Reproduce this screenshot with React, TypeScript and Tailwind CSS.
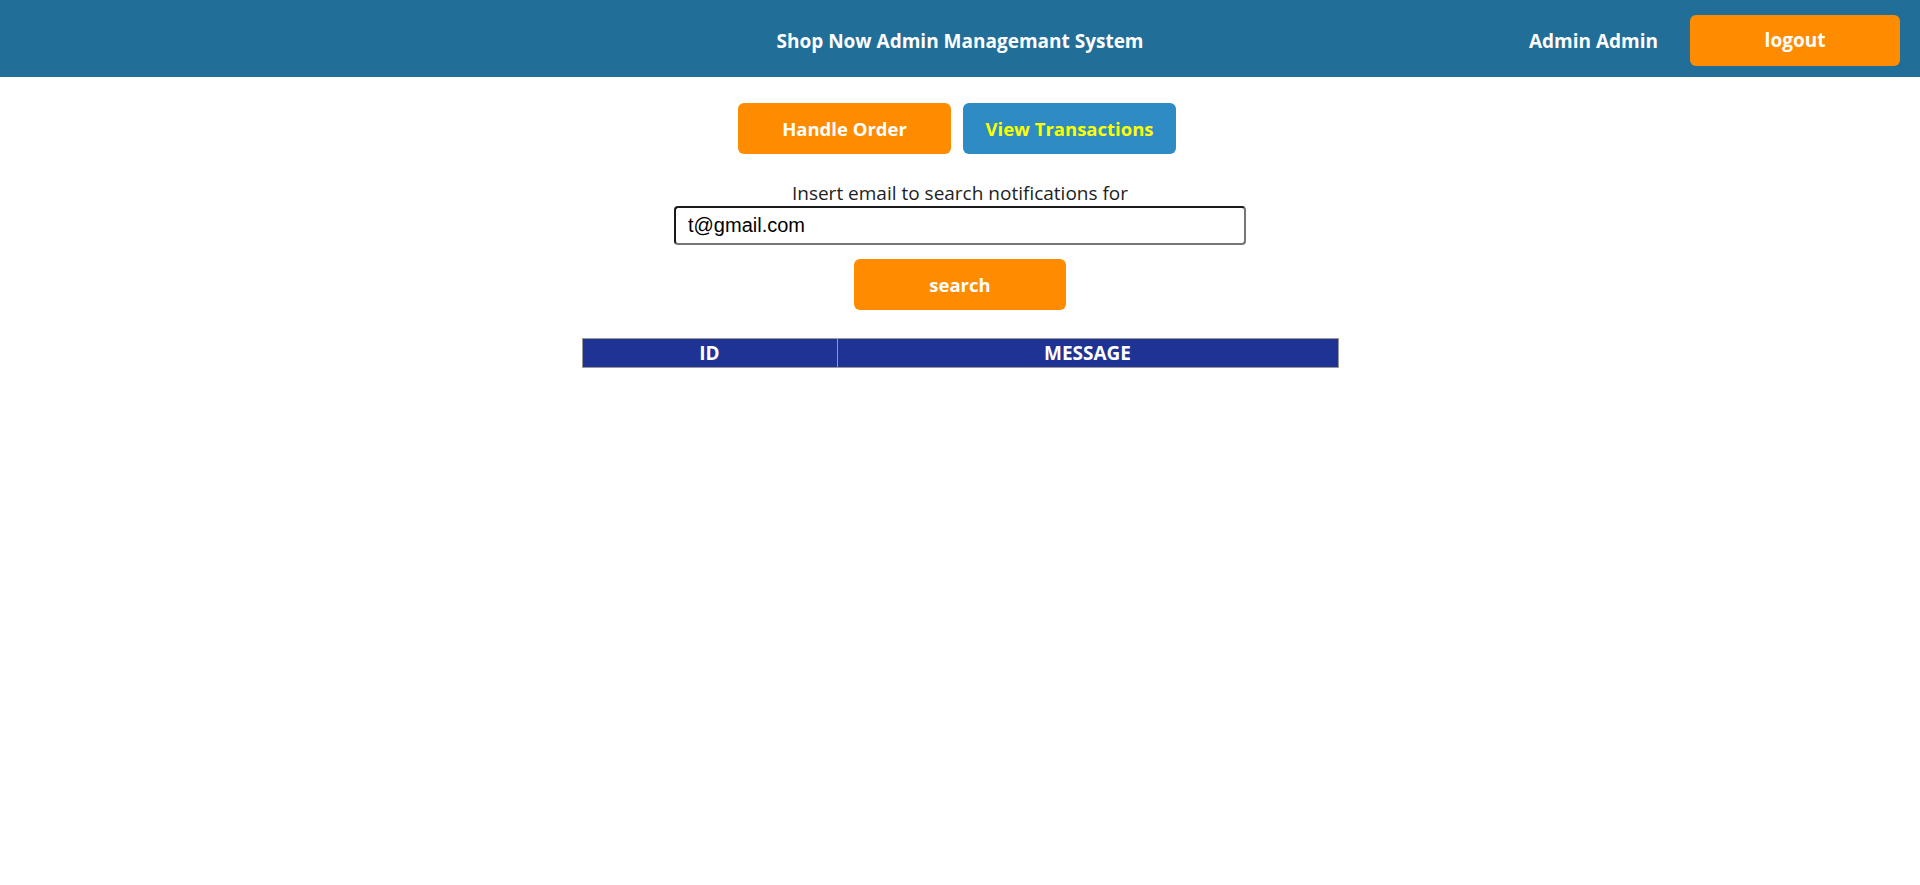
export default function App() {
  return (
    <div className="min-h-[885px] bg-white font-['Open_Sans',sans-serif]">
      {/* top bar */}
      <header className="grid h-[77px] grid-cols-[1fr_auto_1fr] items-center bg-[#216e99] text-white">
        <div />
        <h1 className="pt-[5px] text-[19px] font-bold">Shop Now Admin Managemant System</h1>
        <div className="flex items-center justify-end gap-8 pr-5">
          <span className="pt-[6px] text-[19px] font-bold">Admin Admin</span>
          <button className="mt-[3px] h-[51px] w-[210px] rounded-md bg-[#ff8c00] text-[19px] font-bold text-white">
            logout
          </button>
        </div>
      </header>

      <main className="flex flex-col items-center">
        <div className="mt-[26px] mr-[6px] flex gap-3">
          <button className="h-[51px] w-[213px] rounded-md bg-[#ff8c00] text-[18.5px] font-bold text-white">
            Handle Order
          </button>
          <button className="h-[51px] w-[213px] rounded-md bg-[#2e8bc4] text-[18.5px] font-bold text-[#ffff00]">
            View Transactions
          </button>
        </div>

        <label className="mt-[27px] text-[19px] leading-[25px] text-[#222]">
          Insert email to search notifications for
        </label>
        <input
          defaultValue="t@gmail.com"
          className="h-[39px] w-[572px] rounded-[4px] border-2 border-t-[#1a1a1a] border-l-[#1a1a1a] border-b-[#767676] border-r-[#767676] px-[12px] font-['Liberation_Sans',Arial,sans-serif] text-[20px] text-black outline-none"
        />
        <button className="mt-[14px] h-[51px] w-[212px] rounded-md bg-[#ff8c00] text-[18.5px] font-bold text-white">
          search
        </button>

        <table className="mt-[28px] w-[757px] border-collapse border border-[#9a9a9a] bg-[#1f3394] text-white">
          <thead>
            <tr className="h-[29px]">
              <th className="w-[255px] border-r border-[#9a9a9a] text-[19px] font-bold leading-none">ID</th>
              <th className="text-[19px] font-bold leading-none">MESSAGE</th>
            </tr>
          </thead>
        </table>
      </main>
    </div>
  );
}
